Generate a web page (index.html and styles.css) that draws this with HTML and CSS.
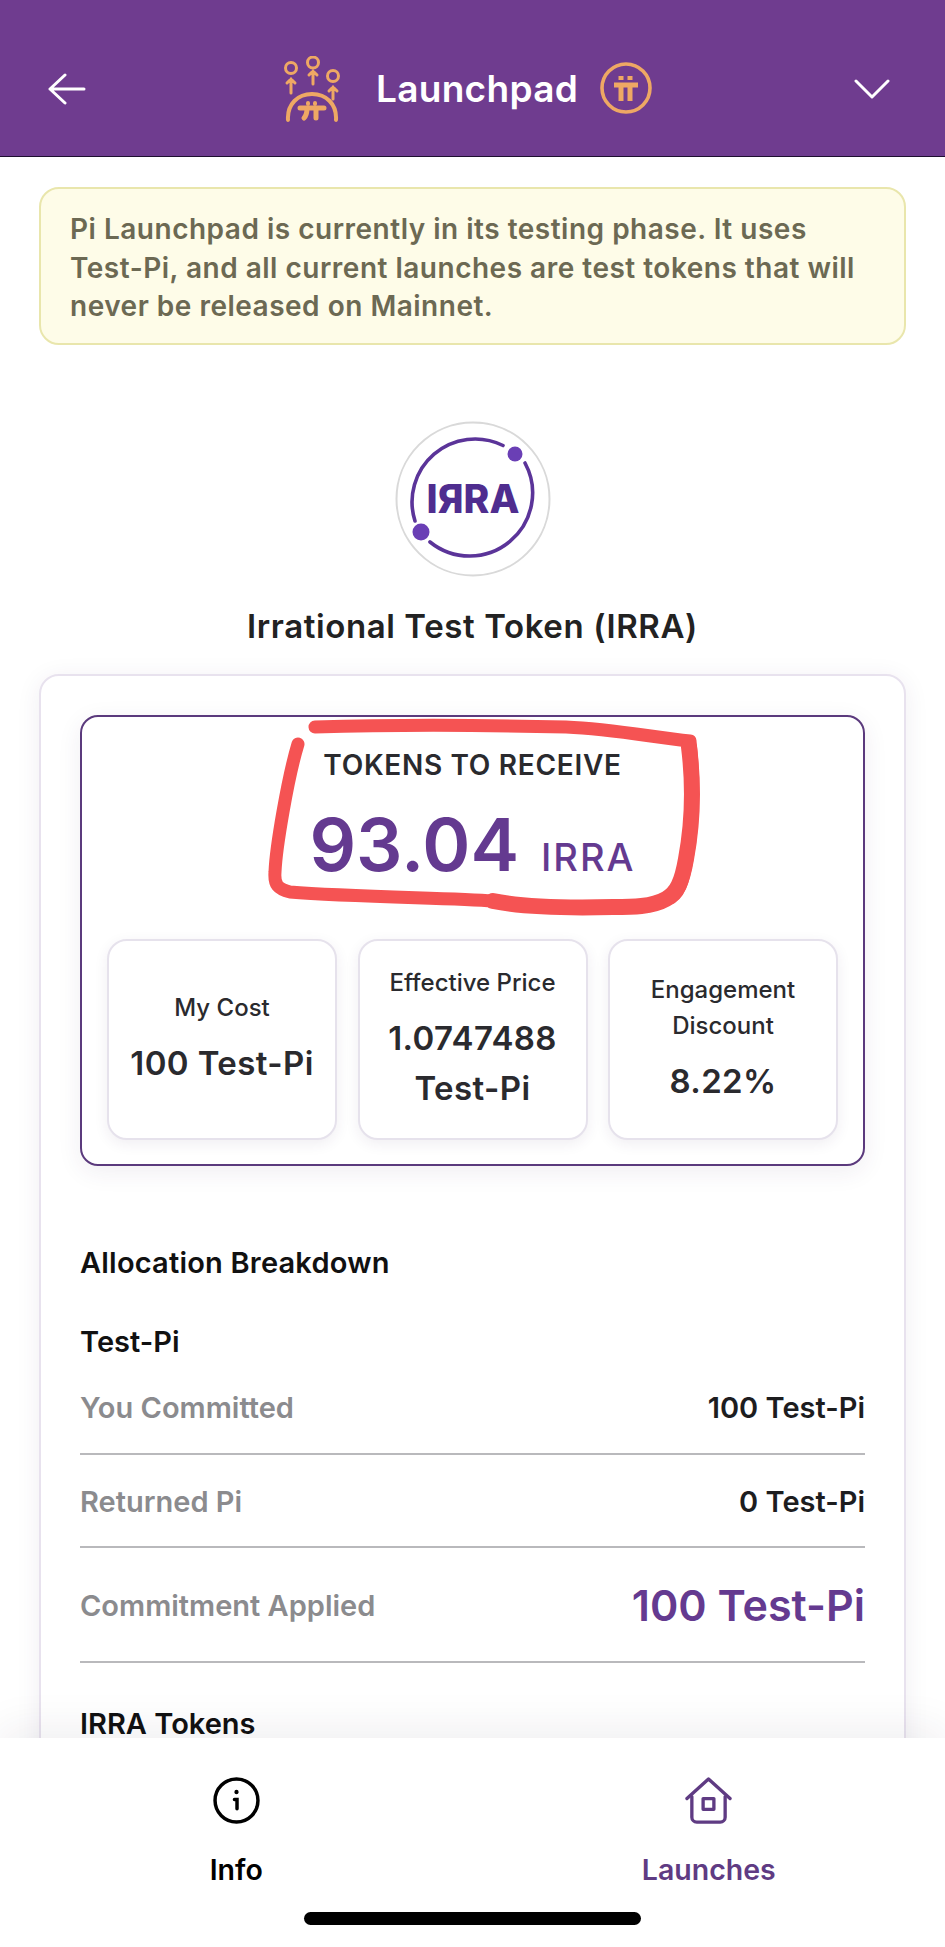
FILE: index.html
```html
<!DOCTYPE html>
<html lang="en">
<head>
    <meta charset="UTF-8">
    <meta name="viewport" content="width=device-width, initial-scale=1.0">
    <title>Launchpad</title>
    <link rel="stylesheet" href="styles.css">
</head>
<body>
    <!-- Top bar -->
    <header class="topbar">
        <svg class="back-icon" viewBox="0 0 38 32" fill="none" stroke="#fff" stroke-width="3" stroke-linecap="round" stroke-linejoin="round">
            <path d="M17 2 2 16l15 14M2 16h34"/>
        </svg>
        <div class="topbar-title">
            <svg class="launch-icon" viewBox="0 0 56 66" fill="none" stroke="#eea864" stroke-width="3" stroke-linecap="round">
                <circle cx="7" cy="12" r="5.500"/>
                <circle cx="29" cy="6.500" r="5.500"/>
                <circle cx="49" cy="20" r="5.500"/>
                <path d="M7 37V23M3 27l4-4 4 4M29 28V15M25 19l4-4 4 4M49 43V31M45 35l4-4 4 4"/>
                <path d="M4 64C3 48 14 38 28 38s25 10 24 26" stroke-width="4"/>
                <path d="M16 52h24M23 52c0 5-1 8-3 10M32 52v10" stroke-width="5"/>
                <path d="M24 47v1M31 47v1" stroke-width="4"/>
            </svg>
            <span class="topbar-name">Launchpad</span>
            <svg class="pi-icon" viewBox="0 0 52 52" fill="none" stroke="#eea864">
                <circle cx="26" cy="26" r="24" stroke-width="3.600"/>
                <path d="M14 23h24M21 23v16M30 23v16" stroke-width="5"/>
                <path d="M21 14v4M30 14v4" stroke-width="5"/>
            </svg>
        </div>
        <svg class="chevron-icon" viewBox="0 0 36 20" fill="none" stroke="#fff" stroke-width="3" stroke-linecap="round" stroke-linejoin="round">
            <path d="M2 2l16 16L34 2"/>
        </svg>
    </header>

    <main class="content">
        <div class="notice">Pi Launchpad is currently in its testing phase. It uses Test-Pi, and all current launches are test tokens that will never be released on Mainnet.</div>

        <!-- Token logo -->
        <svg class="token-logo" viewBox="0 0 156 156" fill="none">
            <circle cx="78" cy="78" r="76.500" fill="#fff" stroke="#d9d9d9" stroke-width="2"/>
            <path d="M20 100A63 63 0 0 1 108 24.500M130 42A63 63 0 0 1 35 121" stroke="#5b3499" stroke-width="3.600" stroke-linecap="round"/>
            <circle cx="120" cy="33" r="7.500" fill="#6a3fb5"/>
            <circle cx="26" cy="111" r="8.500" fill="#6a3fb5"/>
            <text class="token-logo-text" x="78" y="92" text-anchor="middle">IЯRA</text>
        </svg>
        <h1 class="token-name">Irrational Test Token (IRRA)</h1>

        <section class="card">
            <div class="summary">
                <!-- hand drawn marker on top of the screenshot -->
                <svg class="marker" viewBox="0 0 785 450" fill="none">
                    <g stroke="#f55353" stroke-linecap="round" stroke-linejoin="round">
                        <path d="M233 10C300 8 400 8 484 10 530 12 570 20 608 24 613 70 611 110 605 142 601 165 597 178 586 182 570 190 550 190 531 190 490 191 440 190 411 184 370 181 270 180 208 175 196 172 192 168 193 155 194 130 206 60 216 27" stroke-width="13"/>
                        <path d="M607 30C612 70 610 110 604 142 600 165 595 176 584 182 570 190 550 190 531 190 490 191 440 190 411 184" stroke-width="16"/>
                    </g>
                </svg>
                <div class="summary-label">TOKENS TO RECEIVE</div>
                <div class="summary-amount"><span class="amount-num">93.04</span><span class="amount-unit">IRRA</span></div>
                <div class="stats">
                    <div class="stat">
                        <div class="stat-label">My Cost</div>
                        <div class="stat-value">100 Test-Pi</div>
                    </div>
                    <div class="stat">
                        <div class="stat-label">Effective Price</div>
                        <div class="stat-value">1.0747488 Test-Pi</div>
                    </div>
                    <div class="stat">
                        <div class="stat-label">Engagement Discount</div>
                        <div class="stat-value">8.22%</div>
                    </div>
                </div>
            </div>

            <h2 class="breakdown-title">Allocation Breakdown</h2>
            <h3 class="group-title">Test-Pi</h3>
            <div class="row row-first">
                <span class="row-label">You Committed</span>
                <span class="row-value">100 Test-Pi</span>
            </div>
            <div class="row">
                <span class="row-label">Returned Pi</span>
                <span class="row-value">0 Test-Pi</span>
            </div>
            <div class="row row-big">
                <span class="row-label">Commitment Applied</span>
                <span class="row-value">100 Test-Pi</span>
            </div>
            <h3 class="group-title">IRRA Tokens</h3>
        </section>
    </main>

    <!-- Bottom tabs -->
    <nav class="tabbar">
        <div class="tabs">
            <div class="tab">
                <svg class="tab-icon" viewBox="0 0 46 46" fill="none" stroke="#000" stroke-width="3.400" stroke-linecap="round">
                    <circle cx="23" cy="23" r="21"/>
                    <path d="M21 22h2.500v9"/>
                    <path d="M23 14.500v.5" stroke-width="4"/>
                </svg>
                <span class="tab-label">Info</span>
            </div>
            <div class="tab tab-active">
                <svg class="tab-icon" viewBox="0 0 48 48" fill="none" stroke="#5f3b83" stroke-width="3.400" stroke-linecap="round" stroke-linejoin="round">
                    <path d="M2 22 24 2l22 20"/>
                    <path d="M7 20v21a5 5 0 0 0 5 5h24a5 5 0 0 0 5-5V20"/>
                    <rect x="18.500" y="22" width="11" height="11"/>
                </svg>
                <span class="tab-label">Launches</span>
            </div>
        </div>
        <div class="home-indicator"></div>
    </nav>
</body>
</html>
```

FILE: styles.css
```css
html, body {
    margin: 0;
    padding: 0;
    height: 1947px;
    overflow: hidden;
}
body {
    display: flex;
    flex-direction: column;
    font-family: "Inter", "Open Sans", sans-serif;
    background-color: #fff;
    color: #1d1d1f;
}

/* Top bar */
.topbar {
    flex: none;
    height: 156px;
    padding: 0 55px 0 48px;
    display: flex;
    align-items: center;
    justify-content: space-between;
    background-color: #6f3c8f;
    border-bottom: 1px solid #1e1030;
}
.back-icon {
    width: 38px;
    height: 32px;
    margin-top: 22px;
}
.chevron-icon {
    width: 36px;
    height: 20px;
    margin-top: 22px;
}
.topbar-title {
    display: flex;
    align-items: center;
    margin-top: 20px;
    margin-right: 4px;
}
.launch-icon {
    width: 56px;
    height: 66px;
    margin-top: 2px;
}
.topbar-name {
    margin: 0 22px 0 36px;
    font-size: 37px;
    font-weight: 600;
    letter-spacing: 0.3px;
    color: #fff;
}
.pi-icon {
    width: 52px;
    height: 52px;
}

/* Page content */
.content {
    flex: 1;
    min-height: 0;
    padding: 30px 39px 0;
    display: flex;
    flex-direction: column;
    align-items: center;
    overflow: hidden;
}
.notice {
    align-self: stretch;
    padding: 21px 24px 17px 29px;
    background-color: #fefce8;
    border: 2px solid #e9e6ac;
    border-radius: 20px;
    font-size: 28px;
    font-weight: 600;
    letter-spacing: 0.5px;
    line-height: 38.500px;
    color: #6c6953;
}
.token-logo {
    flex: none;
    width: 156px;
    height: 156px;
    margin-top: 76px;
}
.token-logo-text {
    font-family: "Inter", sans-serif;
    font-size: 39px;
    font-weight: 800;
    fill: #4f2d8f;
}
.token-name {
    margin: 28px 0 0;
    font-size: 33px;
    line-height: 42px;
    font-weight: 600;
    letter-spacing: 0.6px;
    color: #222;
}

/* Main card */
.card {
    align-self: stretch;
    flex: none;
    margin-top: 27px;
    padding: 39px 39px 60px;
    background-color: #fff;
    border: 2px solid #e8e2ee;
    border-radius: 20px;
    box-shadow: 0 4px 24px rgba(60, 40, 90, 0.08);
}
.summary {
    position: relative;
    height: 451px;
    box-sizing: border-box;
    padding: 0 25px;
    border: 2px solid #5b3a7d;
    border-radius: 18px;
    box-shadow: 0 6px 24px rgba(60, 40, 90, 0.08);
    text-align: center;
}
.marker {
    position: absolute;
    top: 0;
    left: 0;
    width: 785px;
    height: 450px;
}
.summary-label {
    margin-top: 28px;
    font-size: 28px;
    line-height: 40px;
    font-weight: 600;
    letter-spacing: 0.7px;
    color: #2a2a2e;
}
.summary-amount {
    display: flex;
    align-items: baseline;
    justify-content: center;
    margin-top: 14px;
    height: 92px;
    color: #643a90;
}
.amount-num {
    font-size: 73px;
    line-height: 92px;
    font-weight: 600;
}
.amount-unit {
    margin-left: 22px;
    font-size: 38px;
    font-weight: 500;
    letter-spacing: 2px;
}
.stats {
    display: grid;
    grid-template-columns: repeat(3, 230px);
    justify-content: space-between;
    margin-top: 48px;
}
.stat {
    height: 201px;
    box-sizing: border-box;
    padding: 0 10px;
    display: flex;
    flex-direction: column;
    align-items: center;
    justify-content: center;
    background-color: #fff;
    border: 2px solid #e6e2ec;
    border-radius: 20px;
    box-shadow: 0 4px 14px rgba(60, 40, 90, 0.08);
}
.stat-label {
    width: 180px;
    font-size: 24px;
    line-height: 36px;
    font-weight: 500;
    color: #2a2a2e;
}
.stat-value {
    margin-top: 12px;
    font-size: 33px;
    line-height: 50px;
    font-weight: 600;
    letter-spacing: 0.4px;
    color: #2a2a2e;
}

/* Allocation list */
.breakdown-title {
    margin: 79px 0 0;
    font-size: 29px;
    line-height: 36px;
    font-weight: 600;
    letter-spacing: 0.2px;
    color: #111;
}
.group-title {
    margin: 47px 0 4px;
    font-size: 29px;
    line-height: 28px;
    font-weight: 600;
    color: #111;
}
.row {
    display: flex;
    align-items: center;
    justify-content: space-between;
    height: 93px;
    box-sizing: border-box;
    border-bottom: 2px solid #b9b9bc;
    padding-top: 2px;
}
.row-first {
    height: 95px;
}
.row-big {
    height: 115px;
}
.row-label {
    font-size: 29px;
    font-weight: 600;
    color: #8b8b8e;
}
.row-value {
    font-size: 29px;
    font-weight: 600;
    color: #1d1d1f;
}
.row-big .row-value {
    font-size: 43px;
    color: #643a90;
}

/* Bottom tabs */
.tabbar {
    position: relative;
    flex: none;
    height: 209px;
    background-color: #fff;
    box-shadow: 0 -10px 40px rgba(40, 30, 60, 0.07);
}
.tabs {
    display: grid;
    grid-template-columns: 1fr 1fr;
    padding-top: 39px;
}
.tab {
    display: flex;
    flex-direction: column;
    align-items: center;
}
.tab-icon {
    width: 47px;
    height: 47px;
}
.tab-label {
    margin-top: 26px;
    font-size: 28.500px;
    line-height: 40px;
    font-weight: 600;
    color: #000;
}
.tab-active .tab-label {
    color: #5f3b83;
}
.home-indicator {
    width: 337px;
    height: 13px;
    margin: 22px auto 0;
    background-color: #000;
    border-radius: 7px;
}
```
